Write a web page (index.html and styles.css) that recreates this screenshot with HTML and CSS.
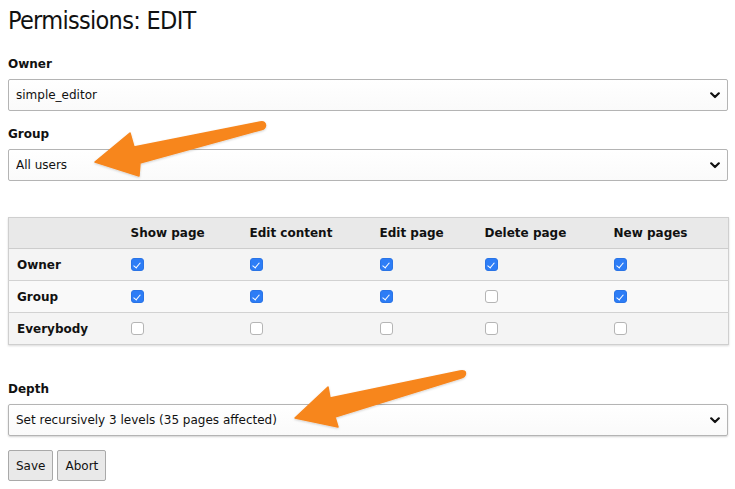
FILE: index.html
```html
<!DOCTYPE html>
<html lang="en">
<head>
<meta charset="utf-8">
<title>Permissions: EDIT</title>
<link rel="stylesheet" href="styles.css">
</head>
<body>
<div class="page">
  <h1 class="title">Permissions: EDIT</h1>

  <div class="field">
    <label class="field-label">Owner</label>
    <div class="select-wrap">
      <select class="select"><option>simple_editor</option></select>
      <svg class="chevron" viewBox="0 0 10 7" width="10" height="7"><path d="M1.2 1.3 L5 5 L8.8 1.3" fill="none" stroke="#111" stroke-width="2.2" stroke-linecap="round" stroke-linejoin="round"/></svg>
    </div>
  </div>

  <div class="field">
    <label class="field-label">Group</label>
    <div class="select-wrap">
      <select class="select"><option>All users</option></select>
      <svg class="chevron" viewBox="0 0 10 7" width="10" height="7"><path d="M1.2 1.3 L5 5 L8.8 1.3" fill="none" stroke="#111" stroke-width="2.2" stroke-linecap="round" stroke-linejoin="round"/></svg>
    </div>
  </div>

  <table class="perm">
    <colgroup>
      <col class="c1"><col class="c2"><col class="c3"><col class="c4"><col class="c5"><col class="c6">
    </colgroup>
    <thead>
      <tr><th></th><th>Show page</th><th>Edit content</th><th>Edit page</th><th>Delete page</th><th>New pages</th></tr>
    </thead>
    <tbody>
      <tr><th>Owner</th>
        <td><span class="cb on"></span></td><td><span class="cb on"></span></td><td><span class="cb on"></span></td><td><span class="cb on"></span></td><td><span class="cb on"></span></td></tr>
      <tr><th>Group</th>
        <td><span class="cb on"></span></td><td><span class="cb on"></span></td><td><span class="cb on"></span></td><td><span class="cb"></span></td><td><span class="cb on"></span></td></tr>
      <tr><th>Everybody</th>
        <td><span class="cb"></span></td><td><span class="cb"></span></td><td><span class="cb"></span></td><td><span class="cb"></span></td><td><span class="cb"></span></td></tr>
    </tbody>
  </table>

  <div class="field depth">
    <label class="field-label">Depth</label>
    <div class="select-wrap shadowed">
      <select class="select"><option>Set recursively 3 levels (35 pages affected)</option></select>
      <svg class="chevron" viewBox="0 0 10 7" width="10" height="7"><path d="M1.2 1.3 L5 5 L8.8 1.3" fill="none" stroke="#111" stroke-width="2.2" stroke-linecap="round" stroke-linejoin="round"/></svg>
    </div>
  </div>

  <div class="buttons">
    <button class="btn">Save</button>
    <button class="btn">Abort</button>
  </div>
</div>

<svg class="arrows" width="735" height="489" viewBox="0 0 735 489">
  <defs>
    <filter id="sh" x="-10%" y="-30%" width="120%" height="160%">
      <feDropShadow dx="0" dy="1" stdDeviation="1" flood-color="#000" flood-opacity="0.18"/>
    </filter>
  </defs>
  <g fill="#f7861d" stroke="#f7861d" stroke-width="1.5" stroke-linejoin="round" filter="url(#sh)">
    <path d="M95 162 L130 133 L134 147 L260 122 Q266 121 265.5 126 Q265 129 262 129.5 L140 163 L139 176 Z"/>
    <path d="M295 418 L328 387 L330 398 L460 371 Q466 370 465.5 374 Q465 377 461 378 L335 417 L338 427 Z"/>
  </g>
</svg>
</body>
</html>
```
FILE: styles.css
```css
html, body {
  margin: 0;
  padding: 0;
  background: #fff;
}
body {
  font-family: "DejaVu Sans", Verdana, sans-serif;
  font-size: 12px;
  color: #111;
  position: relative;
  width: 735px;
  height: 489px;
  overflow: hidden;
}
.page {
  padding: 0 7px 0 8px;
  display: flex;
  flex-direction: column;
}
.title {
  margin: 0;
  padding-top: 4px;
  height: 52px;
  font-family: "Liberation Sans Narrow", "DejaVu Sans Condensed", sans-serif;
  font-weight: normal;
  font-size: 25px;
  line-height: 34px;
  color: #111;
  letter-spacing: -0.7px;
}
.field {
  display: flex;
  flex-direction: column;
  margin-bottom: 15px;
}
.field-label {
  font-weight: bold;
  font-size: 12px;
  line-height: 16px;
  margin-bottom: 7px;
}
.select-wrap {
  position: relative;
  height: 32px;
}
.select {
  appearance: none;
  -webkit-appearance: none;
  width: 100%;
  height: 32px;
  margin: 0;
  padding: 0 30px 0 7px;
  border: 1px solid #b4b4b4;
  border-radius: 2px;
  background: linear-gradient(#ffffff, #fafafa);
  font-family: "DejaVu Sans", Verdana, sans-serif;
  font-size: 12px;
  color: #111;
  box-sizing: border-box;
}
.shadowed .select {
  box-shadow: 0 1px 2px rgba(0,0,0,0.18);
}
.chevron {
  position: absolute;
  right: 8px;
  top: 13px;
}
.perm {
  margin-top: 21px;
  margin-bottom: 36px;
  width: 720px;
  table-layout: fixed;
  border-collapse: collapse;
  border: 1px solid #cfcfcf;
  box-shadow: 0 1px 2px rgba(0,0,0,0.15);
}
.c1 { width: 114px; }
.c2 { width: 119px; }
.c3 { width: 130px; }
.c4 { width: 105px; }
.c5 { width: 129px; }
.c6 { width: 123px; }
.perm th, .perm td {
  text-align: left;
  padding: 0 8px;
  height: 31px;
  font-size: 12px;
  font-weight: bold;
  border-bottom: 1px solid #d2d2d2;
  vertical-align: middle;
}
.perm thead th {
  height: 30px;
  background: #e9e9e9;
  border-bottom: 1px solid #cdcdcd;
}
.perm tbody tr:last-child th,
.perm tbody tr:last-child td { border-bottom: none; }
.perm tbody tr:nth-child(odd) th,
.perm tbody tr:nth-child(odd) td { background: #f4f4f4; }
.perm tbody tr:nth-child(even) th,
.perm tbody tr:nth-child(even) td { background: #f9f9f9; }
.perm td { line-height: 0; }
.cb {
  display: inline-block;
  width: 13px;
  height: 13px;
  box-sizing: border-box;
  border: 1px solid #b5b5b5;
  border-radius: 3px;
  background: #fff;
  position: relative;
}
.cb.on {
  background: #2d7df6;
  border-color: #2a74e6;
}
.cb.on::after {
  content: "";
  position: absolute;
  left: 3.5px;
  top: 1.5px;
  width: 3px;
  height: 6px;
  border: solid #fff;
  border-width: 0 1.4px 1.4px 0;
  transform: rotate(40deg);
}
.depth {
  margin-bottom: 14px;
}
.buttons {
  display: flex;
  gap: 4px;
}
.btn {
  height: 31px;
  padding: 0 7px;
  border: 1px solid #a9a9a9;
  border-radius: 2px;
  background: #e9e9e9;
  font-family: "DejaVu Sans", Verdana, sans-serif;
  font-size: 12px;
  color: #111;
}
.arrows {
  position: absolute;
  left: 0;
  top: 0;
  pointer-events: none;
}
```
